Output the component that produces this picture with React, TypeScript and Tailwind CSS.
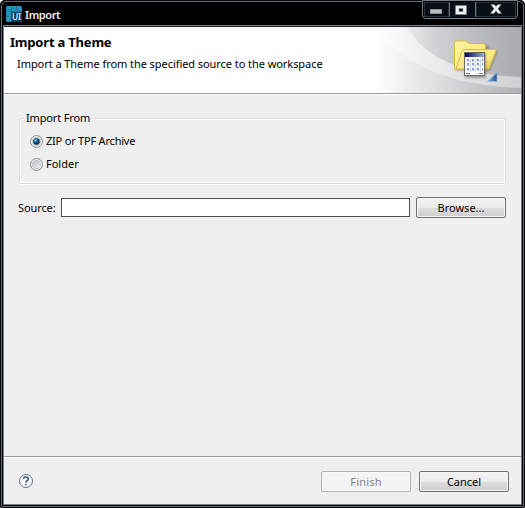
import React from "react";

function AppIcon() {
  return (
    <svg width="16" height="16" viewBox="0 0 16 16" className="shrink-0">
      <rect width="16" height="16" rx="1.5" fill="#2391b8" />
      <path d="M5.5 0V16M10.5 0V6M0 5.5H16M0 11H6" stroke="#0f6f92" strokeWidth=".8" />
      <path d="M1 1h4M6.500 1h3.500M11.500 1h3.500M1 6.500h4M1 12h4" stroke="#369fc2" strokeWidth=".8" />
      <path d="M5 6h11v8.500a1.500 1.500 0 0 1-1.500 1.500H5z" fill="#073e6b" />
      <text x="6" y="14" fontSize="9" fontFamily="'Noto Sans', sans-serif" fontWeight="500" fill="#fff" textLength="9" lengthAdjust="spacingAndGlyphs">UI</text>
    </svg>
  );
}

function CaptionButtons() {
  return (
    <div className="absolute left-[422px] top-0 flex h-[19px] w-[96px] rounded-b-[4px] border border-[#777c84] bg-black p-px">
      <div className="flex w-[25px] items-end justify-center border border-[#293039] bg-[#090f16] pb-[2px]">
        <div className="mr-px h-[5px] w-[12px] border border-[#8d9094] bg-[#bdbdbd]" />
      </div>
      <div className="flex w-[27px] items-center justify-center border-x border-[#6b7078] bg-[#090f16]">
        <svg width="12" height="10" viewBox="0 0 12 10" className="mr-[3px]">
          <path d="M.5.500h11v9H.5zM4 3.500v3h4v-3z" fill="#eee" fillRule="evenodd" stroke="#85888c" strokeWidth=".5" />
        </svg>
      </div>
      <div className="flex flex-1 items-center justify-center border border-[#293039] bg-[#090f16] pb-px">
        <svg width="12" height="10" viewBox="0 0 12 10">
          <path d="M.7.500h3.600L6 2.600 7.700.500h3.600L8 4.700l3.600 4.800H8L6 6.900 4 9.500H.4L4 4.700z" fill="#f1f1f1" stroke="#777" strokeWidth=".5" />
        </svg>
      </div>
    </div>
  );
}

function BannerArt() {
  return (
    <svg width="145" height="66" viewBox="0 0 145 66" className="shrink-0">
      <defs>
        <linearGradient id="sweep" gradientUnits="userSpaceOnUse" x1="20" x2="145" y1="0" y2="0">
          <stop offset="0" stopColor="#f3f3f3" />
          <stop offset=".3" stopColor="#d3d3d5" />
          <stop offset=".65" stopColor="#bbbcbe" />
          <stop offset="1" stopColor="#a9aaad" />
        </linearGradient>
        <linearGradient id="ribbon" gradientUnits="userSpaceOnUse" x1="0" x2="145" y1="0" y2="0">
          <stop offset="0" stopColor="#fff" />
          <stop offset=".35" stopColor="#eeeeee" />
          <stop offset="1" stopColor="#d0d0d2" />
        </linearGradient>
        <linearGradient id="lower" gradientUnits="userSpaceOnUse" x1="0" x2="145" y1="0" y2="0">
          <stop offset="0" stopColor="#fff" />
          <stop offset=".35" stopColor="#e4e4e5" />
          <stop offset="1" stopColor="#b0b1b4" />
        </linearGradient>
        <linearGradient id="folder" x2="1" y2="1">
          <stop offset="0" stopColor="#fff6a5" />
          <stop offset=".6" stopColor="#fbea83" />
          <stop offset="1" stopColor="#e2bd4a" />
        </linearGradient>
        <linearGradient id="caption">
          <stop offset="0" stopColor="#000070" />
          <stop offset="1" stopColor="#9badd8" />
        </linearGradient>
        <linearGradient id="corner" x2="1">
          <stop offset="0" stopColor="#86b6e6" />
          <stop offset="1" stopColor="#254b87" />
        </linearGradient>
        <filter id="shadow"><feGaussianBlur stdDeviation="1.200" /></filter>
      </defs>
      <rect width="145" height="66" fill="url(#sweep)" />
      <path d="M0 0H31C45 26 80 48 145 50V66H0z" fill="url(#ribbon)" />
      <path d="M0 5C32 40 78 59 145 61V66H0z" fill="url(#lower)" />
      <g transform="translate(1 0)">
        <path d="M79 18h33v5h9l-8 21H79z" fill="#555" opacity=".4" filter="url(#shadow)" />
        <path d="M77.500 42V15.500l1.500-1.500h10l2.500 2.500h15l2 2V42z" fill="url(#folder)" stroke="#d9ba3f" />
        <path d="M79 42l6-18 2-1.500h32.500L112 42z" fill="url(#folder)" stroke="#d9ba3f" />
        <rect x="88" y="26" width="21" height="25" fill="#555" opacity=".5" filter="url(#shadow)" />
        <rect x="87.500" y="25.500" width="20" height="23" fill="#fff" stroke="#666763" />
        <rect x="88" y="26" width="19" height="4" fill="url(#caption)" />
        <path d="M89 34.500h17M89 38.500h17M89 43.500h17M93.500 31v14M98.500 31v14M103.500 31v14" stroke="#d0d9f4" />
        <path d="M90 32h2v2h-2zm5 0h2v2h-2zm5 0h2v2h-2zm5 0h1v2h-1zM90 36h2v2h-2zm5 0h2v2h-2zm5 0h2v2h-2zm5 0h1v2h-1zM90 41h2v2h-2zm5 0h2v2h-2zm5 0h2v2h-2zm5 0h1v2h-1z" fill="#8296d2" />
        <path d="M89 46.500h4M102 46.500h4" stroke="#777" />
      </g>
      <path d="M111.500 54.500L121 45.500V54.500z" fill="url(#corner)" stroke="#9bbce0" strokeWidth=".7" />
    </svg>
  );
}

function Radio({ checked = false }: { checked?: boolean }) {
  return (
    <svg width="13" height="13" viewBox="0 0 13 13" className="shrink-0">
      <defs>
        <radialGradient id="dot" cx=".35" cy=".3">
          <stop offset="0" stopColor="#92ddf5" />
          <stop offset=".45" stopColor="#2381b5" />
          <stop offset="1" stopColor="#0a304f" />
        </radialGradient>
        <linearGradient id="well" x2="1" y2="1">
          <stop offset="0" stopColor="#b8bdc3" />
          <stop offset="1" stopColor="#f4f4f4" />
        </linearGradient>
      </defs>
      <circle cx="6.500" cy="6.500" r="6" fill="#f3f3f3" stroke="#8b8c8d" />
      <circle cx="6.500" cy="6.500" r="4.200" fill="url(#well)" stroke="#b6bbc0" strokeWidth=".7" />
      {checked && <circle cx="6.500" cy="6.500" r="3.100" fill="url(#dot)" stroke="#153f60" strokeWidth=".6" />}
    </svg>
  );
}

function Button({ label, disabled = false }: { label: string; disabled?: boolean }) {
  return (
    <button
      disabled={disabled}
      className={
        disabled
          ? "h-[21px] w-[90px] rounded-[2px] border border-[#adb2b5] bg-[#f4f4f4] text-[11px] leading-[19px] tracking-[0.2px] text-[#838383] shadow-[inset_0_0_0_1px_#fafafa]"
          : "h-[21px] w-[90px] rounded-[2px] border border-[#707070] bg-[linear-gradient(#f2f2f2_0%,#ebebeb_50%,#dddddd_51%,#cfcfcf_100%)] text-[11px] leading-[19px] shadow-[inset_0_0_0_1px_#f5f5f5]"
      }
    >
      {label}
    </button>
  );
}

export default function App() {
  return (
    <div className="relative flex h-[508px] w-[525px] flex-col overflow-hidden rounded-t-[5px] rounded-b-[2px] bg-black font-['Noto_Sans','Open_Sans',sans-serif] text-[11px] text-black">
      <div className="flex h-[508px] flex-col rounded-t-[5px] border border-[#05080d]">
        <div className="flex flex-1 flex-col rounded-t-[5px] border border-[#626a73] bg-black px-px pb-px">
          <header className="flex h-[23px] shrink-0 items-start pl-[3px] pt-[4px]">
            <AppIcon />
            <h1 className="ml-[3px] mt-px whitespace-nowrap text-[11px] font-semibold leading-4 tracking-[-0.4px] text-[#eeeeee]">Import</h1>
          </header>
          <main className="flex min-h-0 flex-1 flex-col border border-[#7b8187] bg-[#efefef]">
            <section className="flex h-[68px] shrink-0 justify-between border-b border-[#9a9a9a] border-t border-t-[#202326] bg-white">
              <div className="pl-[6px] pt-[6px]">
                <h2 className="whitespace-nowrap text-[13px] font-bold leading-[18px] tracking-[-0.2px]">Import a Theme</h2>
                <p className="ml-[7px] mt-[5px] whitespace-nowrap text-[11px] leading-[16px] tracking-[-0.06px]">Import a Theme from the specified source to the workspace</p>
              </div>
              <BannerArt />
            </section>
            <section className="flex min-h-0 flex-1 flex-col border-t border-white pl-[15px] pr-[15px] pt-[15px]">
              <fieldset className="h-[74px] rounded-[3px] border border-[#d5dfe5] px-[10px] shadow-[inset_0_0_0_1px_#fff,0_1px_0_#fff]">
                <legend className="-ml-[6px] h-[16px] whitespace-nowrap bg-[#efefef] px-[2px] leading-[16px] tracking-[-0.15px]">Import From</legend>
                <label className="mt-[7px] flex h-[16px] items-center gap-[3px] whitespace-nowrap">
                  <Radio checked />
                  <span className="tracking-[-0.21px]">ZIP or TPF Archive</span>
                </label>
                <label className="mt-[7px] flex h-[16px] items-center gap-[3px] whitespace-nowrap">
                  <Radio />
                  <span>Folder</span>
                </label>
              </fieldset>
              <div className="mt-[13px] flex h-[21px] items-center">
                <label className="-ml-px w-[43px] whitespace-nowrap leading-[16px] tracking-[-0.1px]">Source:</label>
                <input aria-label="Source" className="h-[19px] w-[349px] border border-[#505055] bg-white px-1 outline-none" />
                <div className="ml-[6px]"><Button label="Browse..." /></div>
              </div>
            </section>
            <footer className="flex h-[48px] shrink-0 items-center border-t border-[#9a9a9a] pl-[12px] pr-[12px] pt-px shadow-[inset_0_1px_0_#fff]">
              <svg width="16" height="16" viewBox="0 0 16 16" className="ml-[2px]">
                <circle cx="8" cy="8" r="6.500" fill="#f8f9fb" stroke="#60738e" />
                <path d="M5.500 5.700C5.800 3.300 10.500 3.300 10.300 6c-.1 1.600-2.300 1.500-2.300 3.400M8 10.800v1.500" fill="none" stroke="#3d587f" strokeWidth="1.600" />
              </svg>
              <div className="ml-auto flex gap-[8px]">
                <Button label="Finish" disabled />
                <Button label="Cancel" />
              </div>
            </footer>
          </main>
        </div>
      </div>
      <CaptionButtons />
    </div>
  );
}
